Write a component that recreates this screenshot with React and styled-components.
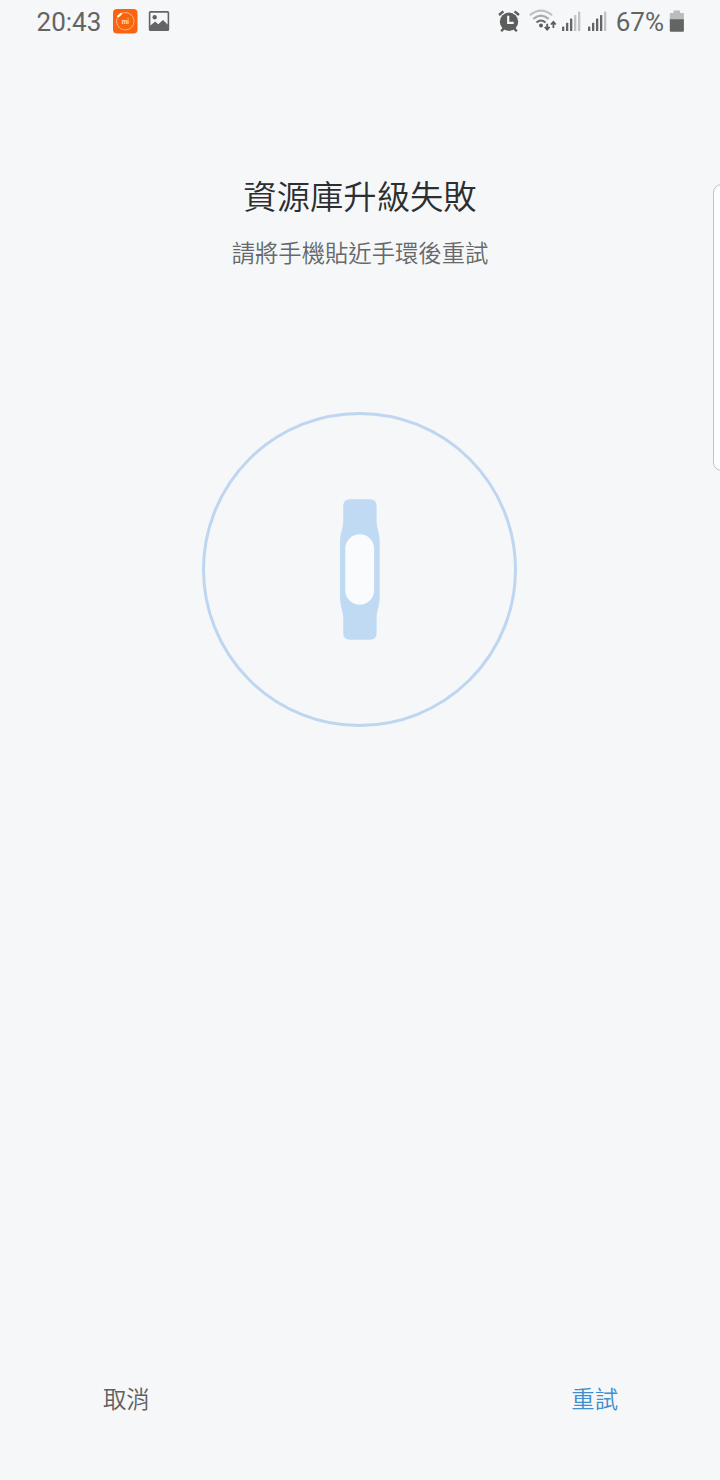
import React from "react";
import styled, { createGlobalStyle } from "styled-components";

const GlobalStyle = createGlobalStyle`
  html, body { margin: 0; padding: 0; background: #f5f7f9; }
  *, *::before, *::after { box-sizing: border-box; }
`;

const Screen = styled.main`
  position: relative;
  display: flex;
  flex-direction: column;
  width: 720px;
  height: 1480px;
  overflow: hidden;
  background: #f5f7f9;
  font-family: Roboto, "Noto Sans CJK TC", sans-serif;
`;

const StatusBar = styled.header`
  display: flex;
  align-items: center;
  justify-content: space-between;
  height: 44px;
  padding: 0 35.5px 0 36px;
  color: #636564;
`;

const StatusGroup = styled.div`
  display: flex;
  align-items: center;
`;

const StatusText = styled.span`
  padding-top: 1px;
  padding-left: ${(p) => p.$inset || 0}px;
  font-size: 26px;
  line-height: 43px;
  width: ${(p) => p.$width}px;
  white-space: nowrap;
`;

const StatusIcon = styled.svg`
  display: block;
  flex: none;
  width: ${(p) => p.$width}px;
  height: 44px;
  margin-left: ${(p) => p.$gap || 0}px;
`;

const Heading = styled.section`
  display: flex;
  flex-direction: column;
  align-items: center;
  padding-top: 127px;
`;

const Title = styled.h1`
  margin: 0;
  font-family: "Noto Sans CJK TC", sans-serif;
  font-size: 33.33px;
  line-height: 48px;
  font-weight: 350;
  color: #2c2e30;
`;

const Subtitle = styled.p`
  margin: 16px 0 0;
  font-family: "Noto Sans CJK TC", sans-serif;
  font-size: 23.33px;
  line-height: 34px;
  font-weight: 350;
  color: #66686a;
`;

const DeviceRing = styled.div`
  display: flex;
  align-items: center;
  justify-content: center;
  align-self: center;
  width: 315.5px;
  height: 315.5px;
  margin: 142.5px 1px 0 0;
  border: 3px solid #bed6f0;
  border-radius: 50%;
`;

const BandIcon = styled.svg`
  display: block;
  width: 40px;
  height: 141px;
`;

const Actions = styled.footer`
  display: flex;
  justify-content: space-between;
  margin-top: auto;
  padding: 0 102px 62px 103px;
`;

const ActionButton = styled.button`
  padding: 0;
  border: 0;
  background: none;
  font-family: "Noto Sans CJK TC", sans-serif;
  font-weight: 350;
  font-size: 23.33px;
  line-height: 40px;
  color: ${(p) => (p.$primary ? "#3f8fce" : "#5e6061")};
`;

const EdgePanel = styled.aside`
  position: absolute;
  top: 184px;
  right: -10px;
  width: 17.5px;
  height: 287px;
  border: 1.5px solid #bfc1c2;
  border-radius: 9px;
  background: #fdfefe;
`;

function BandAppIcon() {
  return (
    <StatusIcon $width={26} $gap={10} viewBox="0 0 26 44">
      <rect x="1" y="9" width="24.5" height="24.5" rx="4" fill="#fa640f" />
      <path d="M10.2 13.1A8.7 8.7 0 1 1 5.2 18" fill="none" stroke="#ffb386" strokeWidth="1" />
      <path d="M6 16.6L9.2 13.7" stroke="#fff" strokeWidth="2" strokeLinecap="round" />
      <text x="13.3" y="23.6" textAnchor="middle" fontFamily="Roboto" fontSize="6.3" fontWeight="700" fill="#ffe0cc">mi</text>
    </StatusIcon>
  );
}

function PictureIcon() {
  return (
    <StatusIcon $width={22} $gap={10} viewBox="0 0 22 44">
      <path
        fillRule="evenodd"
        fill="#636564"
        d="M2.4 11h17.2a1.6 1.6 0 0 1 1.6 1.6v16.8a1.6 1.6 0 0 1-1.6 1.6H2.4a1.6 1.6 0 0 1-1.6-1.6V12.6A1.6 1.6 0 0 1 2.4 11ZM2.4 12.7V25.5L7.2 21.6L10.2 24.2L15 20L19.6 24.6V12.7Z"
      />
      <circle cx="6.7" cy="17.3" r="2.2" fill="#636564" />
    </StatusIcon>
  );
}

function AlarmIcon() {
  return (
    <StatusIcon $width={24} viewBox="0 0 24 44">
      <circle cx="12" cy="21.8" r="9.2" fill="#5c5e5d" />
      <path
        d="M2 15L6.4 11.3M22 15L17.6 11.3M6.6 28.6L4.2 31.2M17.4 28.6L19.8 31.2"
        stroke="#5c5e5d"
        strokeWidth="2.4"
      />
      <path d="M11.2 15.8V22.8H16.7" fill="none" stroke="#f5f7f9" strokeWidth="2.2" />
    </StatusIcon>
  );
}

function WifiIcon() {
  return (
    <StatusIcon $width={28} $gap={8} viewBox="0 0 28 44">
      <g fill="none" strokeWidth="2.1">
        <path d="M0.8 15.2Q12 6.2 23.2 15.2" stroke="#bfc1c1" />
        <path d="M4.3 18.9Q12 12.3 19.7 18.9" stroke="#a8aaaa" />
        <path d="M7.5 22.5Q12 18.5 16.5 22.5" stroke="#686a69" />
      </g>
      <circle cx="12" cy="25.6" r="2" fill="#5c5e5d" />
      <path
        d="M18.2 23.8V29.5M15.8 26.9L18.2 29.6L20.6 26.9M24.4 28V21.8M22 24.5L24.4 21.8L26.8 24.5"
        fill="none"
        stroke="#5c5e5d"
        strokeWidth="1.8"
      />
    </StatusIcon>
  );
}

const SIGNAL_BARS = [
  { x: 0, y: 26.4 },
  { x: 4, y: 22.7 },
  { x: 8, y: 18.5 },
  { x: 12, y: 15 },
  { x: 16, y: 11.4 },
];

function SignalIcon({ level, gap }) {
  return (
    <StatusIcon $width={19} $gap={gap} viewBox="0 0 19 44">
      {SIGNAL_BARS.map((bar, i) => (
        <rect
          key={bar.x}
          x={bar.x}
          y={bar.y}
          width="2.3"
          height={31 - bar.y}
          rx="0.6"
          fill={i < level ? "#636564" : "#c2c4c4"}
        />
      ))}
    </StatusIcon>
  );
}

function BatteryIcon() {
  return (
    <StatusIcon $width={16} $gap={4} viewBox="0 0 16 44">
      <path d="M4.5 10.4h6.6v2.5h2.9a.9.9 0 0 1 .9.9V20H.8v-6.2a.9.9 0 0 1 .9-.9h2.8Z" fill="#bbbdbd" />
      <path d="M.8 19.2h14.1v11.6a1 1 0 0 1-1 1H1.8a1 1 0 0 1-1-1Z" fill="#636564" />
    </StatusIcon>
  );
}

function Band() {
  return (
    <BandIcon viewBox="0 0 40 141">
      <path
        fill="#c0daf4"
        d="M10 .3H30Q36.6 .3 36.6 7.3V22C36.6 30 39.7 33 39.7 44V97C39.7 108 36.6 111 36.6 119V133.7Q36.6 140.7 30 140.7H10Q3.2 140.7 3.2 133.7V119C3.2 111 0 108 0 97V44C0 33 3.2 30 3.2 22V7.3Q3.2 .3 10 .3Z"
      />
      <rect x="5.3" y="35.3" width="28.8" height="70.5" rx="14.4" fill="#f9fbfd" />
    </BandIcon>
  );
}

export default function App() {
  return (
    <>
      <GlobalStyle />
      <Screen>
        <StatusBar>
          <StatusGroup>
            <StatusText $width={66} $inset={0.6}>20:43</StatusText>
            <BandAppIcon />
            <PictureIcon />
          </StatusGroup>
          <StatusGroup>
            <AlarmIcon />
            <WifiIcon />
            <SignalIcon level={3} gap={5} />
            <SignalIcon level={4} gap={7} />
            <StatusText $width={57.5} $inset={8.7}>67%</StatusText>
            <BatteryIcon />
          </StatusGroup>
        </StatusBar>
        <Heading>
          <Title>資源庫升級失敗</Title>
          <Subtitle>請將手機貼近手環後重試</Subtitle>
        </Heading>
        <DeviceRing>
          <Band />
        </DeviceRing>
        <Actions>
          <ActionButton>取消</ActionButton>
          <ActionButton $primary>重試</ActionButton>
        </Actions>
        <EdgePanel />
      </Screen>
    </>
  );
}
